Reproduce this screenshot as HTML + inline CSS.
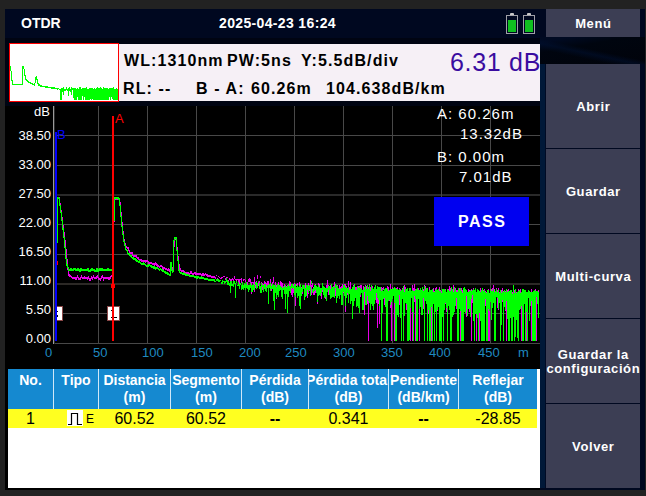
<!DOCTYPE html>
<html><head><meta charset="utf-8">
<style>
*{margin:0;padding:0;box-sizing:border-box}
html,body{width:646px;height:496px;overflow:hidden;background:#222222;font-family:"Liberation Sans",sans-serif}
.a{position:absolute;white-space:nowrap}
#main{position:absolute;left:5px;top:9px;width:640px;height:481px;background:#000820}
.btn{position:absolute;left:546px;width:94px;background:#3c3e54;color:#fff;font-weight:bold;font-size:13px;text-align:center;display:flex;align-items:center;justify-content:center;line-height:14px;letter-spacing:0.6px;padding-top:2px;padding-left:0.6px}
.hd{position:absolute;top:369px;height:40px;color:#fff;font-weight:bold;font-size:14px;text-align:center;line-height:17px;padding-top:3px;white-space:nowrap;overflow:hidden}
.hd span{display:block;margin:0 -20px}
.rw{position:absolute;top:409px;height:19px;color:#000;font-size:16px;text-align:center;line-height:19px}
.yl{position:absolute;color:#fff;font-size:13px;text-align:right;width:50px}
.xl{position:absolute;top:345px;color:#1f8ac0;font-size:13px}
</style></head><body>
<div id="main"></div>
<div class="a" style="left:5px;top:38px;width:535px;height:68px;background:#000412"></div>
<div class="a" style="left:540px;top:37px;width:105px;height:27px;background:linear-gradient(12deg,rgba(0,16,48,0) 30%,rgba(0,16,48,0.55) 42%,rgba(0,16,48,0) 52%),linear-gradient(170deg,#000a22 0%,#000a22 12%,#00050f 35%,#01030b 100%)"></div>
<!-- status -->
<div class="a" style="left:21px;top:15px;color:#fff;font-weight:bold;font-size:14px;line-height:16px">OTDR</div>
<div class="a" style="left:219px;top:15px;color:#fff;font-weight:bold;font-size:14px;line-height:16px;letter-spacing:0.35px">2025-04-23 16:24</div>
<!-- batteries -->
<svg class="a" style="left:500px;top:9px" width="40" height="30" viewBox="500 9 40 30">
 <rect x="510" y="13" width="4" height="3" rx="1" fill="#c8c8c8"/>
 <rect x="506.5" y="15.5" width="11" height="18" fill="#000820" stroke="#a0a0a8" stroke-width="1"/>
 <rect x="508" y="20" width="8" height="12" fill="#10c020"/>
 <rect x="527" y="13" width="4" height="3" rx="1" fill="#c8c8c8"/>
 <rect x="523.5" y="15.5" width="11" height="18" fill="#000820" stroke="#a0a0a8" stroke-width="1"/>
 <rect x="525" y="20" width="8" height="12" fill="#10c020"/>
</svg>
<!-- thumbnail -->
<div class="a" style="left:9px;top:43px;width:110px;height:59px;background:#fff;border:1px solid #ff0000"></div>
<svg class="a" style="left:0;top:0" width="646" height="496" viewBox="0 0 646 496">
 <g fill="none" stroke="#00ff00" stroke-width="1" shape-rendering="crispEdges"><path d="M10.0 66.0 L10.5 66.0 L11.5 75.3 L12.4 84.0 L22.6 84.0 L22.6 66.0 L23.6 66.0 L25.4 78.0 L28.2 81.8 L34.7 84.6 L36.2 76.2 L38.4 84.6 L42.2 86.0 L50.0 87.3 L58.0 88.5"/><path d="M10.0 66.0 L10.5 66.0 L11.5 75.3 L12.4 84.0 L22.6 84.0 L22.6 66.0 L23.6 66.0 L25.4 78.0 L28.2 81.8 L34.7 84.6 L36.2 76.2 L38.4 84.6 L42.2 86.0 L50.0 87.3 L58.0 88.5" transform="translate(0,0.6)"/><path d="M58.5 88V89M59.5 89V90M60.5 89V100M61.5 88V100M62.5 88V92M63.5 87V95M64.5 89V91M65.5 89V91M66.5 87V90M67.5 89V91M68.5 88V96M69.5 87V91M70.5 89V92M71.5 87V95M72.5 88V90M73.5 88V98M74.5 88V100M75.5 88V100M76.5 89V100M77.5 88V97M78.5 89V100M79.5 87V100M80.5 87V100M81.5 89V100M82.5 88V96M83.5 88V100M84.5 88V97M85.5 88V100M86.5 87V100M87.5 89V100M88.5 89V100M89.5 88V100M90.5 88V99M91.5 88V100M92.5 88V99M93.5 89V100M94.5 88V100M95.5 89V100M96.5 88V100M97.5 87V100M98.5 88V100M99.5 88V100M100.5 87V100M101.5 88V100M102.5 89V100M103.5 87V100M104.5 88V100M105.5 88V100M106.5 88V100M107.5 88V100M108.5 89V100M109.5 88V97M110.5 88V100M111.5 88V97M112.5 88V99M113.5 87V100M114.5 89V100M115.5 89V100M116.5 88V100M117.5 89V100"/></g>
</svg>
<!-- info panel -->
<div class="a" style="left:119px;top:44px;width:421px;height:57px;background:#f6f0f6"></div>
<div class="a" style="left:124px;top:52px;color:#000;font-weight:bold;font-size:16px;line-height:18px;letter-spacing:1.1px">WL:1310nm</div>
<div class="a" style="left:227px;top:52px;color:#000;font-weight:bold;font-size:16px;line-height:18px;letter-spacing:1.1px">PW:5ns</div>
<div class="a" style="left:301px;top:52px;color:#000;font-weight:bold;font-size:16px;line-height:18px;letter-spacing:1.1px">Y:5.5dB/div</div>
<div class="a" style="left:123px;top:80px;color:#000;font-weight:bold;font-size:16px;line-height:18px;letter-spacing:1.1px">RL: --</div>
<div class="a" style="left:196px;top:80px;color:#000;font-weight:bold;font-size:16px;line-height:18px;letter-spacing:1.1px">B - A:</div>
<div class="a" style="left:251px;top:80px;color:#000;font-weight:bold;font-size:16px;line-height:18px;letter-spacing:1.1px">60.26m</div>
<div class="a" style="left:326px;top:80px;color:#000;font-weight:bold;font-size:16px;line-height:18px;letter-spacing:1.1px">104.638dB/km</div>
<div class="a" style="left:450px;top:47px;color:#3a0ca0;font-size:25px;line-height:30px;letter-spacing:0.7px">6.31 dB</div>
<!-- graph -->
<div class="a" style="left:5px;top:106px;width:535px;height:263px;background:#000"></div>
<div class="a" style="left:5px;top:369px;width:3px;height:121px;background:#000"></div>
<div class="a" style="left:5px;top:488px;width:535px;height:2px;background:#000"></div>
<svg class="a" style="left:0;top:0" width="646" height="496" viewBox="0 0 646 496">
 <g stroke="#484848" stroke-width="1" shape-rendering="crispEdges">
  <line x1="54" y1="135.5" x2="540" y2="135.5"/>
  <line x1="54" y1="165.5" x2="540" y2="165.5"/>
  <line x1="54" y1="224.5" x2="540" y2="224.5"/>
  <line x1="54" y1="254.5" x2="540" y2="254.5"/>
  <line x1="54" y1="313.5" x2="540" y2="313.5"/>
  <line x1="54" y1="343.5" x2="540" y2="343.5"/>
  <line x1="54" y1="195" x2="540" y2="195" stroke="#2a2a2a" stroke-width="2"/>
  <line x1="54" y1="284" x2="540" y2="284" stroke="#2c2926" stroke-width="2"/>
  <line x1="98.5" y1="106" x2="98.5" y2="343"/>
  <line x1="147.5" y1="106" x2="147.5" y2="343"/>
  <line x1="196.5" y1="106" x2="196.5" y2="343"/>
  <line x1="245.5" y1="106" x2="245.5" y2="343"/>
  <line x1="294.5" y1="106" x2="294.5" y2="343"/>
  <line x1="343.5" y1="106" x2="343.5" y2="343"/>
  <line x1="392.5" y1="106" x2="392.5" y2="343"/>
  <line x1="441.5" y1="106" x2="441.5" y2="343"/>
  <line x1="490.5" y1="106" x2="490.5" y2="343"/>
 </g>
 <line x1="53.5" y1="106" x2="53.5" y2="344" stroke="#9a9a9a" stroke-width="1" shape-rendering="crispEdges"/><line x1="54.5" y1="106" x2="54.5" y2="344" stroke="#2a2a2a" stroke-width="1" shape-rendering="crispEdges"/>
 <g fill="none" stroke="#e800e8" stroke-width="1" shape-rendering="crispEdges"><path d="M57.5 205.0 L57.8 197.5 L59.2 197.5 L62.0 216.7 L65.0 240.0 L67.5 263.3 L68.5 274.0 L72.0 277.0 L72.5 277.0 L73.5 277.0 L74.5 277.0 L75.5 278.0 L76.5 278.0 L77.5 276.0 L78.5 278.0 L79.5 278.0 L80.5 278.0 L81.5 276.0 L82.5 277.5 L83.5 277.5 L84.5 277.0 L85.5 277.5 L86.5 277.5 L87.5 278.0 L88.5 277.0 L89.5 279.0 L90.5 279.0 L91.5 277.0 L92.5 278.0 L93.5 276.0 L94.5 277.5 L95.5 277.0 L96.5 277.0 L97.5 276.0 L98.5 278.0 L99.5 278.0 L100.5 279.0 L101.5 277.0 L102.5 275.5 L103.5 279.0 L104.5 277.5 L105.5 277.0 L106.5 277.0 L107.5 277.0 L108.5 278.0 L109.5 278.0 L110.5 277.0 L111.5 275.5"/><path d="M57.5 205.0 L57.8 197.5 L59.2 197.5 L62.0 216.7 L65.0 240.0 L67.5 263.3 L68.5 274.0 L72.0 277.0 L72.5 277.0 L73.5 277.0 L74.5 277.0 L75.5 278.0 L76.5 278.0 L77.5 276.0 L78.5 278.0 L79.5 278.0 L80.5 278.0 L81.5 276.0 L82.5 277.5 L83.5 277.5 L84.5 277.0 L85.5 277.5 L86.5 277.5 L87.5 278.0 L88.5 277.0 L89.5 279.0 L90.5 279.0 L91.5 277.0 L92.5 278.0 L93.5 276.0 L94.5 277.5 L95.5 277.0 L96.5 277.0 L97.5 276.0 L98.5 278.0 L99.5 278.0 L100.5 279.0 L101.5 277.0 L102.5 275.5 L103.5 279.0 L104.5 277.5 L105.5 277.0 L106.5 277.0 L107.5 277.0 L108.5 278.0 L109.5 278.0 L110.5 277.0 L111.5 275.5" transform="translate(0,1)"/></g>
 <g fill="none" stroke="#e800e8" stroke-width="1" shape-rendering="crispEdges"><path d="M114.4 221.0 L114.4 198.0 L119.0 198.0 L120.2 203.0 L121.2 214.5 L122.6 228.0 L124.2 240.0 L126.0 246.0 L127.1 247.4 L128.2 247.9 L129.3 250.3 L130.3 252.3 L131.3 252.4 L132.3 252.4 L133.3 255.5 L134.3 255.5 L135.3 255.2 L136.3 255.8 L137.4 257.5 L138.4 257.2 L139.4 259.8 L140.4 259.5 L141.4 259.8 L142.4 260.6 L143.4 260.4 L144.4 260.7 L145.4 261.0 L146.5 260.3 L147.5 260.6 L148.5 261.9 L149.5 262.7 L150.5 262.5 L151.5 262.8 L152.5 263.1 L153.5 263.9 L154.5 264.2 L155.5 263.0 L156.5 264.3 L157.5 265.1 L158.5 265.9 L159.5 266.2 L160.5 265.5 L161.5 265.1 L162.5 266.6 L163.5 268.2 L164.5 267.7 L165.6 268.3 L166.6 268.8 L167.6 269.4 L168.6 268.9 L169.6 270.5 L170.6 270.5 L171.2 262.0 L172.2 268.5 L173.2 270.0 L174.3 238.0 L176.3 238.0 L177.0 247.0 L178.0 256.0 L179.5 268.0 L181.0 270.0 L182.1 270.4 L183.2 270.7 L184.3 271.6 L185.3 272.0 L186.4 272.9 L187.5 272.2 L188.6 272.6 L189.6 273.7 L190.7 271.8 L191.7 272.0 L192.7 274.1 L193.8 273.2 L194.8 272.3 L195.8 273.4 L196.9 274.0 L197.9 273.6 L198.9 273.8 L200.0 273.9 L201.0 274.0 L202.0 275.2 L203.0 273.4 L204.0 275.1 L205.0 273.9 L206.0 274.1 L207.0 274.3 L208.0 275.5 L209.0 275.7 L210.0 275.9 L211.0 276.1 L212.0 276.9 L213.0 276.6 L214.0 276.8 L215.0 277.0"/><path d="M114.4 221.0 L114.4 198.0 L119.0 198.0 L120.2 203.0 L121.2 214.5 L122.6 228.0 L124.2 240.0 L126.0 246.0 L127.1 247.4 L128.2 247.9 L129.3 250.3 L130.3 252.3 L131.3 252.4 L132.3 252.4 L133.3 255.5 L134.3 255.5 L135.3 255.2 L136.3 255.8 L137.4 257.5 L138.4 257.2 L139.4 259.8 L140.4 259.5 L141.4 259.8 L142.4 260.6 L143.4 260.4 L144.4 260.7 L145.4 261.0 L146.5 260.3 L147.5 260.6 L148.5 261.9 L149.5 262.7 L150.5 262.5 L151.5 262.8 L152.5 263.1 L153.5 263.9 L154.5 264.2 L155.5 263.0 L156.5 264.3 L157.5 265.1 L158.5 265.9 L159.5 266.2 L160.5 265.5 L161.5 265.1 L162.5 266.6 L163.5 268.2 L164.5 267.7 L165.6 268.3 L166.6 268.8 L167.6 269.4 L168.6 268.9 L169.6 270.5 L170.6 270.5 L171.2 262.0 L172.2 268.5 L173.2 270.0 L174.3 238.0 L176.3 238.0 L177.0 247.0 L178.0 256.0 L179.5 268.0 L181.0 270.0 L182.1 270.4 L183.2 270.7 L184.3 271.6 L185.3 272.0 L186.4 272.9 L187.5 272.2 L188.6 272.6 L189.6 273.7 L190.7 271.8 L191.7 272.0 L192.7 274.1 L193.8 273.2 L194.8 272.3 L195.8 273.4 L196.9 274.0 L197.9 273.6 L198.9 273.8 L200.0 273.9 L201.0 274.0 L202.0 275.2 L203.0 273.4 L204.0 275.1 L205.0 273.9 L206.0 274.1 L207.0 274.3 L208.0 275.5 L209.0 275.7 L210.0 275.9 L211.0 276.1 L212.0 276.9 L213.0 276.6 L214.0 276.8 L215.0 277.0" transform="translate(0,1)"/></g>
 <path d="M215.5 277V279M216.5 275V276M217.5 278V279M218.5 276V277M219.5 277V278M220.5 278V279M221.5 277V279M222.5 277V278M223.5 276V277M224.5 276V277M225.5 278V280M226.5 277V279M227.5 277V278M228.5 280V283M229.5 278V280M230.5 279V281M231.5 279V283M232.5 278V280M233.5 279V282M234.5 276V279M235.5 279V280M236.5 279V282M237.5 279V280M238.5 279V284M239.5 279V284M240.5 279V280M241.5 278V283M242.5 282V286M243.5 279V281M244.5 279V280M245.5 280V282M246.5 282V283M247.5 282V286M248.5 279V282M249.5 278V282M250.5 279V285M251.5 282V294M252.5 282V283M253.5 282V285M254.5 277V292M255.5 282V288M256.5 281V283M257.5 275V279M258.5 282V286M259.5 281V285M260.5 276V278M261.5 282V285M262.5 283V290M263.5 284V285M264.5 281V285M265.5 282V286M266.5 283V287M267.5 281V287M268.5 281V285M269.5 284V287M270.5 279V286M271.5 284V291M272.5 282V284M273.5 277V283M274.5 285V291M275.5 282V285M276.5 285V299M277.5 285V292M278.5 282V285M279.5 285V291M280.5 281V288M281.5 282V291M282.5 283V291M283.5 286V288M284.5 284V293M285.5 287V291M286.5 286V292M287.5 285V305M288.5 285V289M289.5 281V286M290.5 282V289M291.5 286V295M292.5 287V297M293.5 284V293M294.5 283V287M295.5 288V306M296.5 284V286M297.5 283V287M298.5 288V293M299.5 282V305M300.5 287V295M301.5 287V289M302.5 286V294M303.5 285V287M304.5 285V294M305.5 283V291M306.5 285V295M307.5 289V298M308.5 283V294M309.5 289V291M310.5 280V288M311.5 285V295M312.5 283V287M313.5 287V295M314.5 287V295M315.5 284V293M316.5 286V290M317.5 288V304M318.5 283V293M319.5 284V290M320.5 288V292M321.5 288V299M322.5 288V292M323.5 287V294M324.5 289V293M325.5 289V299M326.5 285V288M327.5 280V290M328.5 285V295M329.5 288V295M330.5 285V290M331.5 288V297M332.5 287V293M333.5 286V293M334.5 282V288M335.5 287V296M336.5 288V299M337.5 285V290M338.5 289V292M339.5 285V294M340.5 287V291M341.5 286V295M342.5 284V295M343.5 289V293M344.5 284V287M345.5 284V312M346.5 286V294M347.5 290V295M348.5 281V291M349.5 287V292M350.5 282V293M351.5 290V295M352.5 287V290M353.5 285V294M354.5 289V294M355.5 287V295M356.5 287V298M357.5 286V291M358.5 286V300M359.5 286V295M360.5 285V297M361.5 285V293M362.5 290V295M363.5 286V292M364.5 291V315M365.5 285V287M366.5 286V295M367.5 289V304M368.5 287V341M369.5 284V292M370.5 287V303M371.5 288V302M372.5 286V293M373.5 291V298M374.5 289V302M375.5 288V299M376.5 291V303M377.5 291V328M378.5 291V304M379.5 288V324M380.5 290V297M381.5 287V341M382.5 288V290M383.5 287V290M384.5 289V305M385.5 291V303M386.5 289V300M387.5 286V328M388.5 287V299M389.5 290V301M390.5 284V308M391.5 289V341M392.5 287V295M393.5 288V291M394.5 292V341M395.5 291V305M396.5 288V292M397.5 287V295M398.5 292V297M399.5 288V305M400.5 289V302M401.5 291V341M402.5 288V298M403.5 288V304M404.5 285V294M405.5 287V292M406.5 291V310M407.5 289V306M408.5 291V302M409.5 291V295M410.5 291V341M411.5 292V298M412.5 285V341M413.5 288V301M414.5 284V302M415.5 289V341M416.5 292V311M417.5 289V292M418.5 288V296M419.5 292V341M420.5 292V304M421.5 290V311M422.5 290V298M423.5 289V309M424.5 285V295M425.5 286V297M426.5 289V302M427.5 288V309M428.5 293V314M429.5 287V306M430.5 291V310M431.5 291V341M432.5 292V296M433.5 288V303M434.5 291V295M435.5 288V302M436.5 287V299M437.5 290V311M438.5 292V295M439.5 287V298M440.5 290V305M441.5 291V310M442.5 293V309M443.5 290V341M444.5 290V309M445.5 289V304M446.5 292V312M447.5 292V303M448.5 289V299M449.5 286V298M450.5 288V297M451.5 290V341M452.5 289V303M453.5 285V302M454.5 293V301M455.5 288V304M456.5 290V309M457.5 290V341M458.5 292V298M459.5 288V293M460.5 289V341M461.5 288V302M462.5 290V341M463.5 290V306M464.5 293V299M465.5 290V301M466.5 291V317M467.5 292V309M468.5 289V309M469.5 290V312M470.5 293V306M471.5 289V341M472.5 292V303M473.5 288V294M474.5 290V299M475.5 292V303M476.5 292V341M477.5 292V305M478.5 291V341M479.5 291V341M480.5 288V295M481.5 292V314M482.5 293V315M483.5 290V313M484.5 289V328M485.5 291V306M486.5 292V341M487.5 292V306M488.5 289V341M489.5 293V341M490.5 291V298M491.5 289V312M492.5 288V292M493.5 285V296M494.5 289V307M495.5 293V341M496.5 288V294M497.5 290V308M498.5 288V310M499.5 292V300M500.5 291V298M501.5 290V308M502.5 288V302M503.5 291V296M504.5 290V306M505.5 291V311M506.5 291V341M507.5 290V308M508.5 289V341M509.5 294V301M510.5 291V302M511.5 290V311M512.5 292V341M513.5 289V300M514.5 290V308M515.5 294V314M516.5 292V303M517.5 293V303M518.5 289V309M519.5 293V305M520.5 289V293M521.5 292V341M522.5 290V329M523.5 291V313M524.5 293V304M525.5 291V297M526.5 292V341M527.5 294V307M528.5 292V296M529.5 293V303M530.5 294V303M531.5 289V341M532.5 292V302M533.5 291V298M534.5 291V299M535.5 289V312M536.5 294V341M537.5 293V299M538.5 290V307" fill="none" stroke="#e800e8" stroke-width="1" shape-rendering="crispEdges"/>
 <g fill="none" stroke="#00ff00" stroke-width="1" shape-rendering="crispEdges"><path d="M57.5 242.0 L57.5 197.5 L59.0 197.5 L61.6 216.7 L64.4 240.0 L66.5 263.3 L69.0 269.5 L70.0 269.5 L71.0 268.5 L72.0 269.5 L73.0 269.5 L74.0 268.5 L75.0 268.5 L76.0 269.5 L77.0 269.5 L78.0 268.5 L79.0 269.5 L80.0 270.5 L81.0 268.5 L82.0 269.5 L83.0 269.5 L84.0 269.5 L85.0 269.5 L86.0 269.5 L87.0 269.5 L88.0 268.5 L89.0 270.5 L90.0 270.5 L91.0 269.5 L92.0 268.5 L93.0 269.5 L94.0 269.5 L95.0 270.5 L96.0 270.5 L97.0 268.5 L98.0 270.5 L99.0 269.5 L100.0 268.5 L101.0 269.5 L102.0 268.5 L103.0 269.5 L104.0 269.5 L105.0 269.5 L106.0 269.5 L107.0 269.5 L108.0 268.5 L109.0 269.5 L110.0 269.5 L111.0 269.5 L112.0 269.5"/><path d="M57.5 242.0 L57.5 197.5 L59.0 197.5 L61.6 216.7 L64.4 240.0 L66.5 263.3 L69.0 269.5 L70.0 269.5 L71.0 268.5 L72.0 269.5 L73.0 269.5 L74.0 268.5 L75.0 268.5 L76.0 269.5 L77.0 269.5 L78.0 268.5 L79.0 269.5 L80.0 270.5 L81.0 268.5 L82.0 269.5 L83.0 269.5 L84.0 269.5 L85.0 269.5 L86.0 269.5 L87.0 269.5 L88.0 268.5 L89.0 270.5 L90.0 270.5 L91.0 269.5 L92.0 268.5 L93.0 269.5 L94.0 269.5 L95.0 270.5 L96.0 270.5 L97.0 268.5 L98.0 270.5 L99.0 269.5 L100.0 268.5 L101.0 269.5 L102.0 268.5 L103.0 269.5 L104.0 269.5 L105.0 269.5 L106.0 269.5 L107.0 269.5 L108.0 268.5 L109.0 269.5 L110.0 269.5 L111.0 269.5 L112.0 269.5" transform="translate(0,1)"/></g>
 <g fill="none" stroke="#00ff00" stroke-width="1" shape-rendering="crispEdges"><path d="M114.1 220.3 L114.1 197.5 L118.8 197.5 L119.8 202.0 L120.8 214.2 L122.2 228.3 L123.8 240.5 L125.8 248.5 L127.0 250.2 L128.1 252.9 L129.3 253.6 L130.3 255.1 L131.3 255.6 L132.3 257.6 L133.3 257.6 L134.3 258.6 L135.3 258.3 L136.3 260.0 L137.4 260.6 L138.4 261.3 L139.4 261.0 L140.4 262.7 L141.4 263.0 L142.4 263.3 L143.4 262.6 L144.4 263.9 L145.4 264.2 L146.5 265.5 L147.5 265.3 L148.5 265.1 L149.5 264.4 L150.5 265.7 L151.5 266.0 L152.5 266.3 L153.5 267.1 L154.5 266.9 L155.5 268.2 L156.5 267.5 L157.5 267.8 L158.5 268.1 L159.5 269.4 L160.5 268.7 L161.5 269.8 L162.5 269.9 L163.5 270.6 L164.5 271.2 L165.6 272.3 L166.6 272.4 L167.6 273.1 L168.6 273.7 L169.6 274.3 L170.6 274.3 L171.0 261.6 L172.0 269.7 L173.0 272.0 L174.1 237.4 L176.1 237.4 L176.7 246.5 L177.7 256.6 L179.1 270.7 L180.7 272.7 L181.7 273.0 L182.8 273.8 L183.8 272.5 L184.8 273.8 L185.8 274.1 L186.9 274.4 L187.9 274.7 L189.0 275.0 L190.0 275.3 L191.0 275.5 L192.0 275.7 L193.0 274.9 L194.0 276.1 L195.0 276.3 L196.0 276.5 L197.0 277.7 L198.0 275.9 L199.0 277.1 L200.0 277.8 L201.0 277.5 L202.0 276.7 L203.0 277.9 L204.0 278.1 L205.0 278.4 L206.0 278.6 L207.0 278.8 L208.0 279.0 L209.0 279.2 L210.0 279.9 L211.0 279.6 L212.0 279.9 L213.0 280.1 L214.0 279.3 L215.0 280.5"/><path d="M114.1 220.3 L114.1 197.5 L118.8 197.5 L119.8 202.0 L120.8 214.2 L122.2 228.3 L123.8 240.5 L125.8 248.5 L127.0 250.2 L128.1 252.9 L129.3 253.6 L130.3 255.1 L131.3 255.6 L132.3 257.6 L133.3 257.6 L134.3 258.6 L135.3 258.3 L136.3 260.0 L137.4 260.6 L138.4 261.3 L139.4 261.0 L140.4 262.7 L141.4 263.0 L142.4 263.3 L143.4 262.6 L144.4 263.9 L145.4 264.2 L146.5 265.5 L147.5 265.3 L148.5 265.1 L149.5 264.4 L150.5 265.7 L151.5 266.0 L152.5 266.3 L153.5 267.1 L154.5 266.9 L155.5 268.2 L156.5 267.5 L157.5 267.8 L158.5 268.1 L159.5 269.4 L160.5 268.7 L161.5 269.8 L162.5 269.9 L163.5 270.6 L164.5 271.2 L165.6 272.3 L166.6 272.4 L167.6 273.1 L168.6 273.7 L169.6 274.3 L170.6 274.3 L171.0 261.6 L172.0 269.7 L173.0 272.0 L174.1 237.4 L176.1 237.4 L176.7 246.5 L177.7 256.6 L179.1 270.7 L180.7 272.7 L181.7 273.0 L182.8 273.8 L183.8 272.5 L184.8 273.8 L185.8 274.1 L186.9 274.4 L187.9 274.7 L189.0 275.0 L190.0 275.3 L191.0 275.5 L192.0 275.7 L193.0 274.9 L194.0 276.1 L195.0 276.3 L196.0 276.5 L197.0 277.7 L198.0 275.9 L199.0 277.1 L200.0 277.8 L201.0 277.5 L202.0 276.7 L203.0 277.9 L204.0 278.1 L205.0 278.4 L206.0 278.6 L207.0 278.8 L208.0 279.0 L209.0 279.2 L210.0 279.9 L211.0 279.6 L212.0 279.9 L213.0 280.1 L214.0 279.3 L215.0 280.5" transform="translate(0,1)"/></g>
 <path d="M215.5 281V282M216.5 279V281M217.5 279V281M218.5 279V282M219.5 280V282M220.5 280V281M221.5 282V284M222.5 280V284M223.5 281V282M224.5 281V284M225.5 281V283M226.5 278V282M227.5 280V285M228.5 281V285M229.5 283V286M230.5 281V293M231.5 281V286M232.5 284V286M233.5 281V287M234.5 281V284M235.5 283V298M236.5 281V283M237.5 285V286M238.5 282V286M239.5 284V289M240.5 283V285M241.5 285V290M242.5 282V289M243.5 285V290M244.5 283V288M245.5 284V290M246.5 282V288M247.5 285V289M248.5 285V292M249.5 285V290M250.5 283V288M251.5 285V292M252.5 285V292M253.5 284V290M254.5 285V290M255.5 282V285M256.5 282V289M257.5 283V288M258.5 281V282M259.5 283V289M260.5 286V293M261.5 283V293M262.5 285V287M263.5 285V292M264.5 284V289M265.5 284V291M266.5 287V292M267.5 285V288M268.5 285V304M269.5 284V288M270.5 283V291M271.5 286V289M272.5 284V289M273.5 285V301M274.5 285V310M275.5 285V293M276.5 287V298M277.5 284V295M278.5 285V297M279.5 285V291M280.5 286V290M281.5 287V297M282.5 288V299M283.5 286V290M284.5 287V294M285.5 285V309M286.5 287V294M287.5 286V313M288.5 284V297M289.5 286V291M290.5 286V293M291.5 284V288M292.5 284V289M293.5 286V288M294.5 284V295M295.5 284V297M296.5 287V293M297.5 285V298M298.5 287V296M299.5 286V306M300.5 284V309M301.5 288V296M302.5 285V292M303.5 285V289M304.5 285V300M305.5 288V297M306.5 285V296M307.5 285V290M308.5 286V293M309.5 285V290M310.5 287V296M311.5 281V284M312.5 289V293M313.5 288V292M314.5 285V291M315.5 285V290M316.5 286V293M317.5 287V302M318.5 285V296M319.5 287V295M320.5 288V296M321.5 288V293M322.5 283V290M323.5 286V295M324.5 287V298M325.5 288V297M326.5 288V301M327.5 288V292M328.5 286V290M329.5 286V295M330.5 289V299M331.5 284V298M332.5 287V297M333.5 287V297M334.5 287V298M335.5 284V288M336.5 285V303M337.5 286V298M338.5 288V296M339.5 289V299M340.5 289V295M341.5 288V305M342.5 288V305M343.5 285V292M344.5 285V296M345.5 287V306M346.5 288V298M347.5 288V293M348.5 287V303M349.5 290V294M350.5 289V304M351.5 289V301M352.5 287V319M353.5 286V306M354.5 284V301M355.5 290V298M356.5 290V307M357.5 286V306M358.5 288V308M359.5 287V313M360.5 288V295M361.5 289V293M362.5 290V310M363.5 290V310M364.5 287V292M365.5 286V305M366.5 289V305M367.5 285V296M368.5 289V301M369.5 285V303M370.5 291V310M371.5 285V304M372.5 288V306M373.5 289V310M374.5 287V304M375.5 285V300M376.5 289V293M377.5 286V298M378.5 287V300M379.5 287V306M380.5 287V300M381.5 291V341M382.5 289V313M383.5 291V299M384.5 289V298M385.5 288V307M386.5 288V341M387.5 289V341M388.5 291V301M389.5 290V300M390.5 289V305M391.5 289V302M392.5 289V299M393.5 288V296M394.5 287V303M395.5 288V341M396.5 289V341M397.5 289V315M398.5 290V317M399.5 289V295M400.5 291V318M401.5 290V341M402.5 289V299M403.5 286V341M404.5 292V316M405.5 289V303M406.5 289V304M407.5 288V341M408.5 291V341M409.5 288V340M410.5 288V308M411.5 291V298M412.5 290V312M413.5 291V341M414.5 291V296M415.5 290V299M416.5 289V341M417.5 288V341M418.5 290V299M419.5 290V309M420.5 288V307M421.5 290V315M422.5 287V315M423.5 291V298M424.5 286V341M425.5 290V301M426.5 288V304M427.5 288V341M428.5 292V310M429.5 290V341M430.5 290V341M431.5 290V307M432.5 289V341M433.5 292V304M434.5 292V341M435.5 290V312M436.5 289V341M437.5 290V310M438.5 289V307M439.5 291V341M440.5 291V341M441.5 293V341M442.5 289V317M443.5 289V341M444.5 289V310M445.5 290V303M446.5 292V308M447.5 289V341M448.5 290V306M449.5 291V310M450.5 291V341M451.5 287V341M452.5 289V317M453.5 292V315M454.5 287V312M455.5 290V306M456.5 292V298M457.5 292V341M458.5 288V341M459.5 290V309M460.5 288V311M461.5 291V341M462.5 293V341M463.5 288V341M464.5 287V312M465.5 289V313M466.5 290V296M467.5 292V316M468.5 292V309M469.5 291V309M470.5 290V317M471.5 291V299M472.5 290V295M473.5 289V321M474.5 290V341M475.5 288V314M476.5 292V314M477.5 289V318M478.5 290V341M479.5 291V313M480.5 292V321M481.5 290V341M482.5 288V341M483.5 291V341M484.5 290V341M485.5 292V299M486.5 293V341M487.5 290V341M488.5 290V309M489.5 293V311M490.5 289V302M491.5 291V320M492.5 291V308M493.5 289V303M494.5 292V341M495.5 291V341M496.5 289V297M497.5 292V298M498.5 290V309M499.5 293V303M500.5 290V341M501.5 293V325M502.5 291V300M503.5 292V341M504.5 290V307M505.5 292V310M506.5 289V301M507.5 292V319M508.5 291V341M509.5 291V341M510.5 290V318M511.5 290V341M512.5 294V341M513.5 285V317M514.5 293V341M515.5 289V337M516.5 293V320M517.5 292V338M518.5 291V341M519.5 290V310M520.5 293V309M521.5 292V306M522.5 289V341M523.5 289V341M524.5 290V304M525.5 290V341M526.5 292V312M527.5 292V341M528.5 290V298M529.5 291V321M530.5 292V306M531.5 292V301M532.5 292V341M533.5 291V341M534.5 290V341M535.5 291V341M536.5 291V297M537.5 291V304M538.5 292V318" fill="none" stroke="#00ff00" stroke-width="1" shape-rendering="crispEdges"/>
 <rect x="56.5" y="306.5" width="6" height="14" fill="#fff" stroke="#8a4848" stroke-width="1" shape-rendering="crispEdges"/>
 <rect x="57" y="311" width="1" height="1" fill="#000"/><rect x="57" y="315" width="1" height="2" fill="#000"/>
 <rect x="55" y="132" width="2" height="209" fill="#0000ff"/>
 <rect x="107.5" y="306.5" width="12" height="14" fill="#fff" stroke="#8a4848" stroke-width="1" shape-rendering="crispEdges"/>
 <rect x="111" y="310" width="1" height="1" fill="#000"/><rect x="111" y="317" width="6" height="1" fill="#000"/>
 <rect x="112" y="116" width="2" height="225" fill="#ff0000"/>
 <rect x="111" y="284" width="4" height="4" fill="#ff0000"/>
 <rect x="57" y="261" width="1" height="4" fill="#ff0000"/>
</svg>
<div class="a" style="left:57px;top:127px;color:#0000ff;font-size:13px;line-height:15px">B</div>
<div class="a" style="left:115px;top:111px;color:#ff0000;font-size:13px;line-height:15px">A</div>
<div class="a" style="left:34px;top:104px;color:#fff;font-size:13px;line-height:15px">dB</div>
<div class="yl" style="left:1px;top:128px">38.50</div>
<div class="yl" style="left:1px;top:157px">33.00</div>
<div class="yl" style="left:1px;top:186px">27.50</div>
<div class="yl" style="left:1px;top:215px">22.00</div>
<div class="yl" style="left:1px;top:244px">16.50</div>
<div class="yl" style="left:1px;top:273px">11.00</div>
<div class="yl" style="left:1px;top:302px">5.50</div>
<div class="yl" style="left:1px;top:331px">0.00</div>
<div class="xl" style="left:45px">0</div>
<div class="xl" style="left:93px">50</div>
<div class="xl" style="left:142px">100</div>
<div class="xl" style="left:191px">150</div>
<div class="xl" style="left:239px">200</div>
<div class="xl" style="left:285px">250</div>
<div class="xl" style="left:333px">300</div>
<div class="xl" style="left:381px">350</div>
<div class="xl" style="left:429px">400</div>
<div class="xl" style="left:478px">450</div>
<div class="xl" style="left:518px">m</div>
<div class="a" style="left:437px;top:105px;color:#fff;font-size:15px;line-height:17px;letter-spacing:1px">A: 60.26m</div>
<div class="a" style="left:460px;top:125px;color:#fff;font-size:15px;line-height:17px;letter-spacing:1px">13.32dB</div>
<div class="a" style="left:437px;top:148px;color:#fff;font-size:15px;line-height:17px;letter-spacing:1px">B: 0.00m</div>
<div class="a" style="left:459px;top:168px;color:#fff;font-size:15px;line-height:17px;letter-spacing:1px">7.01dB</div>
<div class="a" style="left:434px;top:197px;width:95px;height:49px;background:#0000f0;color:#fff;font-weight:bold;font-size:16px;line-height:50px;text-align:center;letter-spacing:1.5px;padding-left:1.5px">PASS</div>
<!-- table -->
<div class="a" style="left:8px;top:369px;width:532px;height:119px;background:#fff"></div>
<div class="a" style="left:8px;top:369px;width:529px;height:40px;background:#1589d0"></div>
<div class="a" style="left:8px;top:409px;width:529px;height:19px;background:#ffff20"></div>
<div class="a" style="left:53px;top:369px;width:1px;height:40px;background:#d0e8f8"></div>
<div class="a" style="left:98px;top:369px;width:1px;height:40px;background:#d0e8f8"></div>
<div class="a" style="left:170px;top:369px;width:1px;height:40px;background:#d0e8f8"></div>
<div class="a" style="left:241px;top:369px;width:1px;height:40px;background:#d0e8f8"></div>
<div class="a" style="left:308px;top:369px;width:1px;height:40px;background:#d0e8f8"></div>
<div class="a" style="left:388px;top:369px;width:1px;height:40px;background:#d0e8f8"></div>
<div class="a" style="left:458px;top:369px;width:1px;height:40px;background:#d0e8f8"></div>
<div class="hd" style="left:8px;width:45px">No.</div>
<div class="hd" style="left:54px;width:44px">Tipo</div>
<div class="hd" style="left:99px;width:71px">Distancia<br>(m)</div>
<div class="hd" style="left:171px;width:70px">Segmento<br>(m)</div>
<div class="hd" style="left:242px;width:66px">Pérdida<br>(dB)</div>
<div class="hd" style="left:309px;width:79px"><span>Pérdida total<br>(dB)</span></div>
<div class="hd" style="left:389px;width:69px">Pendiente<br>(dB/km)</div>
<div class="hd" style="left:459px;width:78px">Reflejar<br>(dB)</div>
<div class="rw" style="left:8px;width:45px">1</div>
<div class="a" style="left:67px;top:410px;width:16px;height:16px;background:#fff"></div>
<svg class="a" style="left:67px;top:410px" width="16" height="16" viewBox="0 0 16 16"><path d="M1 14.5 H4.5 V3.5 H10.5 V14.5 H15" fill="none" stroke="#000" stroke-width="1.2"/></svg>
<div class="a" style="left:86px;top:412px;color:#000;font-size:12px;line-height:15px">E</div>
<div class="rw" style="left:99px;width:71px">60.52</div>
<div class="rw" style="left:171px;width:70px">60.52</div>
<div class="rw" style="left:242px;width:66px;font-weight:bold">--</div>
<div class="rw" style="left:309px;width:79px">0.341</div>
<div class="rw" style="left:389px;width:69px;font-weight:bold">--</div>
<div class="rw" style="left:459px;width:78px">-28.85</div>
<!-- sidebar -->
<div class="a" style="left:540px;top:64px;width:6px;height:424px;background:#001838;border-right:1px solid #000a24"></div>
<div class="btn" style="top:9px;height:28px">Menú</div>
<div class="btn" style="top:64px;height:84px">Abrir</div>
<div class="btn" style="top:149px;height:84px">Guardar</div>
<div class="btn" style="top:234px;height:84px">Multi-curva</div>
<div class="btn" style="top:319px;height:84px">Guardar la<br>configuración</div>
<div class="btn" style="top:404px;height:84px">Volver</div>
</body></html>
